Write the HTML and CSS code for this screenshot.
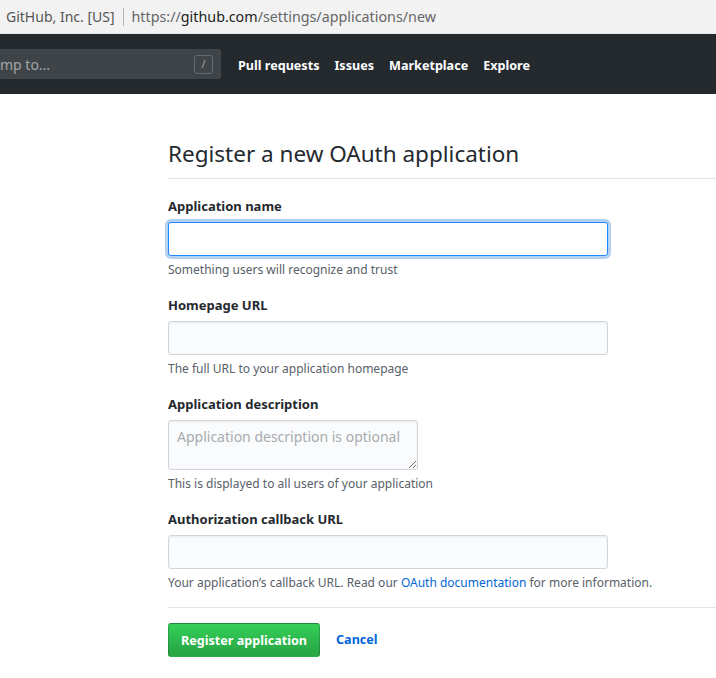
FILE: index.html
```html
<!DOCTYPE html>
<html lang="en">
<head>
    <meta charset="UTF-8">
    <title>Register a new OAuth application</title>
    <link rel="stylesheet" href="styles.css">
</head>
<body>
    <div class="browser-bar">
        <span class="site-id">GitHub, Inc. [US]</span>
        <span class="bar-sep"></span>
        <span class="url">https://<b>github.com</b>/settings/applications/new</span>
    </div>

    <header class="site-header">
        <div class="search">
            <span class="search-text">mp to...</span>
            <span class="search-key">/</span>
        </div>
        <nav class="main-nav">
            <a href="#">Pull requests</a>
            <a href="#">Issues</a>
            <a href="#">Marketplace</a>
            <a href="#">Explore</a>
        </nav>
    </header>

    <div class="container">
        <h2 class="subhead">Register a new OAuth application</h2>

        <form class="oauth-form">
            <div class="form-group">
                <label for="app-name">Application name</label>
                <input type="text" id="app-name" class="form-control focus">
                <p class="note">Something users will recognize and trust</p>
            </div>

            <div class="form-group">
                <label for="app-url">Homepage URL</label>
                <input type="text" id="app-url" class="form-control">
                <p class="note">The full URL to your application homepage</p>
            </div>

            <div class="form-group">
                <label for="app-desc">Application description</label>
                <textarea id="app-desc" class="form-control short" placeholder="Application description is optional"></textarea>
                <p class="note">This is displayed to all users of your application</p>
            </div>

            <div class="form-group">
                <label for="app-callback">Authorization callback URL</label>
                <input type="text" id="app-callback" class="form-control">
                <p class="note">Your application’s callback URL. Read our <a href="#">OAuth documentation</a> for more information.</p>
            </div>

            <div class="form-actions">
                <button type="button" class="btn-primary">Register application</button>
                <a href="#" class="btn-link">Cancel</a>
            </div>
        </form>
    </div>
</body>
</html>
```

FILE: styles.css
```css
* {
    margin: 0;
    padding: 0;
    box-sizing: border-box;
}

body {
    font-family: 'Segoe UI', 'Noto Sans', 'Liberation Sans', sans-serif;
    font-size: 14px;
    color: #24292e;
    background-color: #fff;
    line-height: 1.5;
}

/* Browser address bar */
.browser-bar {
    height: 34px;
    display: flex;
    align-items: center;
    padding-left: 6px;
    background-color: #f2f2f2;
    border-bottom: 1px dotted #dcdcdc;
    font-size: 14px;
    color: #555;
}

.bar-sep {
    width: 1px;
    height: 18px;
    margin: 0 8px 0 8px;
    background-color: #b5b5b5;
}

.url {
    font-size: 14.3px;
    color: #666;
}

.url b {
    font-weight: normal;
    color: #222;
}

/* Site header */
.site-header {
    height: 60px;
    display: flex;
    align-items: center;
    background-color: #24292e;
}

.search {
    width: 221px;
    height: 30px;
    display: flex;
    align-items: center;
    justify-content: space-between;
    padding: 0 8px 0 0;
    background-color: #3f4448;
    border-radius: 0 3px 3px 0;
}

.search-text {
    color: #a3a6a9;
    font-size: 14px;
}

.search-key {
    width: 19px;
    height: 19px;
    display: flex;
    align-items: center;
    justify-content: center;
    border: 1px solid #666b70;
    border-radius: 3px;
    color: #a3a6a9;
    font-size: 11px;
}

.main-nav {
    display: flex;
    gap: 15px;
    margin-left: 17px;
    padding-top: 4px;
}

.main-nav a {
    color: #fff;
    font-weight: 700;
    font-size: 12.6px;
    text-decoration: none;
}

/* Content */
.container {
    margin-left: 168px;
    padding-top: 46px;
}

.subhead {
    font-size: 22.5px;
    font-weight: 400;
    line-height: 1.25;
    padding-bottom: 10px;
    border-bottom: 1px solid #e1e4e8;
    margin-bottom: 17px;
}

.form-group {
    margin-bottom: 16px;
}

.form-group label {
    display: block;
    font-size: 13px;
    font-weight: 700;
    line-height: 20px;
    margin-bottom: 6px;
}

.form-control {
    display: block;
    width: 440px;
    height: 34px;
    padding: 6px 8px;
    font-family: inherit;
    font-size: 14px;
    color: #24292e;
    background-color: #fafbfc;
    border: 1px solid #d1d5da;
    border-radius: 3px;
    box-shadow: inset 0 1px 2px rgba(27, 31, 35, 0.075);
    outline: none;
}

.form-control.focus {
    background-color: #fff;
    border-color: #2188ff;
    box-shadow: 0 0 0 3px rgba(3, 102, 214, 0.3);
}

.form-control.short {
    width: 250px;
    height: 50px;
    resize: vertical;
}

.form-control::placeholder {
    color: #a8abae;
}

.note {
    margin-top: 5px;
    font-size: 12px;
    line-height: 18px;
    color: #586069;
}

.note a {
    color: #0366d6;
    text-decoration: none;
}

.form-actions {
    display: flex;
    align-items: center;
    gap: 16px;
    margin-top: -1px;
    padding-top: 15px;
    border-top: 1px solid #e1e4e8;
}

.btn-primary {
    height: 34px;
    padding: 0 12px;
    font-family: inherit;
    font-size: 12.6px;
    font-weight: 700;
    color: #fff;
    background-image: linear-gradient(-180deg, #34d058 0%, #28a745 90%);
    border: 1px solid rgba(27, 31, 35, 0.2);
    border-radius: 3px;
    cursor: pointer;
}

.btn-link {
    font-size: 12.6px;
    font-weight: 700;
    color: #0366d6;
    text-decoration: none;
}
```
